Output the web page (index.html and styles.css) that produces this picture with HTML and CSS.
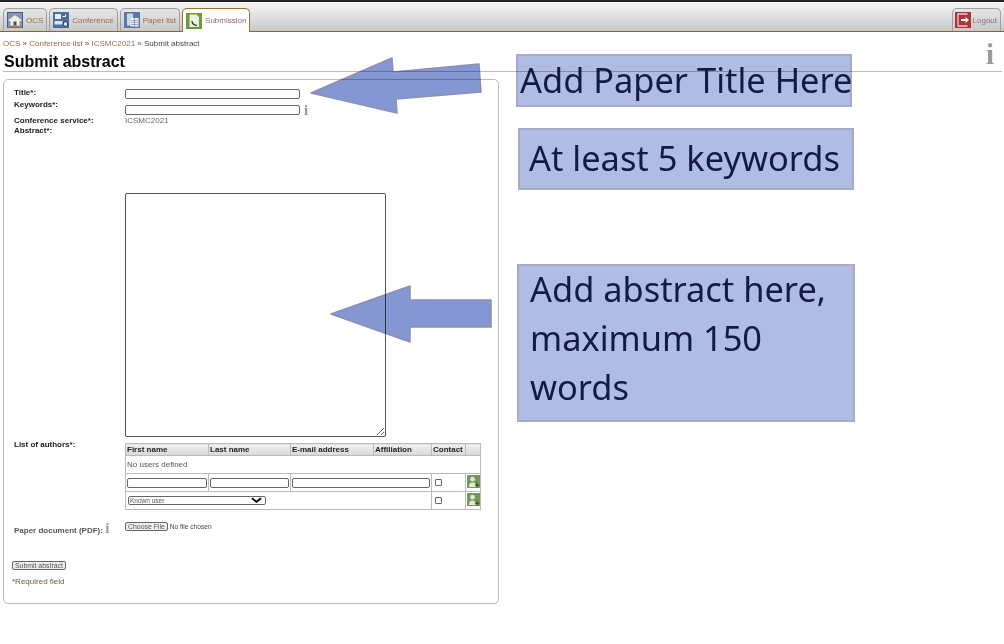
FILE: index.html
```html
<!DOCTYPE html>
<html lang="en">
<head>
<meta charset="utf-8">
<title>Submit abstract</title>
<link rel="stylesheet" href="styles.css">
</head>
<body>
<div class="topline"></div>
<nav class="tabbar">
  <a class="tab"><svg class="ico" viewBox="0 0 16 16"><rect width="16" height="16" fill="#3f5f8f"/><rect x="1" y="1" width="14" height="14" fill="#8296b4"/><path d="M1.500 8 8 3l6.500 5v1h-13z" fill="#f1ece4"/><rect x="3.500" y="8" width="9" height="5.500" fill="#f4f1ea"/><rect x="6.500" y="9.500" width="3" height="4" fill="#5a4a3a"/><path d="M1 15h14" stroke="#c8702a"/></svg>OCS</a>
  <a class="tab"><svg class="ico" viewBox="0 0 16 16"><rect width="16" height="16" fill="#4a6d9f"/><rect x="2" y="2" width="6" height="5" fill="#e8edf5"/><path d="M9.500 4.500h3M12.500 2.500v2" stroke="#fff"/><rect x="1.500" y="9" width="8" height="3.500" fill="#dfe5ef"/><circle cx="12.500" cy="12" r="2.300" fill="#e9edf3" stroke="#263a5a"/></svg>Conference</a>
  <a class="tab"><svg class="ico" viewBox="0 0 16 16"><rect width="16" height="16" fill="#5679a8"/><rect x="3" y="1.500" width="6" height="12" fill="#cdd6e4"/><rect x="6.500" y="6" width="8" height="8.500" fill="#eef0f4"/><path d="M7 8.500h7M7 10.500h7M7 12.500h7M10.500 6v8.500" stroke="#7d8896" stroke-width=".7"/></svg>Paper list</a>
  <a class="tab active"><svg class="ico" viewBox="0 0 16 16"><rect width="16" height="16" fill="#6d9b3a"/><path d="M3.500 1.500h7l2.500 2.500v10h-9.500z" fill="#eef2ea"/><path d="M6 8c0 3 1.500 4 5 4.500" fill="none" stroke="#2b3a20" stroke-width="1.300"/></svg>Submission</a>
  <a class="tab logout"><svg class="ico" viewBox="0 0 16 16"><rect width="16" height="16" fill="#b23038"/><path d="M12.500 2H3v12h9.500" fill="none" stroke="#eccfc8" stroke-width="1.300"/><path d="M6 7h4.500V5L14 8l-3.500 3V9H6z" fill="#fff"/></svg>Logout</a>
</nav>
<main class="page">
  <div class="crumbs"><a>OCS</a> » <a>Conference list</a> » <a>ICSMC2021</a> » <span>Submit abstract</span></div>
  <div class="headrow">
    <h1>Submit abstract</h1>
    <span class="info big">i</span>
  </div>
  <form class="card">
    <div class="row r-title"><label>Title*:</label><input class="text wide"></div>
    <div class="row r-kw"><label>Keywords*:</label><div class="val"><input class="text wide"><span class="info">i</span></div></div>
    <div class="row r-conf"><label>Conference service*:</label><div class="plain">ICSMC2021</div></div>
    <div class="row r-abs"><label>Abstract*:</label><textarea class="abstract"></textarea></div>
    <div class="row r-auth"><label>List of authors*:</label>
      <table class="authors">
        <colgroup><col class="c1"><col class="c2"><col class="c3"><col class="c4"><col class="c5"><col class="c6"></colgroup>
        <thead><tr><th>First name</th><th>Last name</th><th>E-mail address</th><th>Affiliation</th><th>Contact</th><th></th></tr></thead>
        <tbody>
          <tr class="none"><td colspan="6">No users defined</td></tr>
          <tr class="entry"><td><input class="text cell"></td><td><input class="text cell"></td><td colspan="2"><input class="text cell"></td><td><input type="checkbox" class="chk"></td><td class="add"><svg class="addicon" viewBox="0 0 14 14"><rect width="14" height="14" fill="#75985a"/><circle cx="6" cy="4.500" r="2.500" fill="#dfe8d6"/><path d="M2 13c0-4 2-5 4-5s3 1 3.500 2V13z" fill="#dfe8d6"/><path d="M10.500 8.500v4.500M8.500 11h4.500" stroke="#2c3d22" stroke-width="1"/></svg></td></tr>
          <tr class="entry"><td colspan="4"><div class="knownwrap"><select class="known"><option>Known user</option></select><svg class="chev" viewBox="0 0 12 6"><path d="M1 1l5 4 5-4" fill="none" stroke="#000" stroke-width="2"/></svg></div></td><td><input type="checkbox" class="chk"></td><td class="add"><svg class="addicon" viewBox="0 0 14 14"><rect width="14" height="14" fill="#75985a"/><circle cx="6" cy="4.500" r="2.500" fill="#dfe8d6"/><path d="M2 13c0-4 2-5 4-5s3 1 3.500 2V13z" fill="#dfe8d6"/><path d="M10.500 8.500v4.500M8.500 11h4.500" stroke="#2c3d22" stroke-width="1"/></svg></td></tr>
        </tbody>
      </table>
    </div>
    <div class="row r-pdf"><label class="soft">Paper document (PDF): <span class="info">i</span></label><div class="file"><button type="button" class="btn">Choose File</button><span>No file chosen</span></div></div>
    <button type="button" class="btn submit">Submit abstract</button>
    <p class="req">*Required field</p>
  </form>
</main>
<svg class="arrow a1" viewBox="0 0 172 57"><polygon points="1,36 82,1 83,15 169,7 171,35 86,42 87,56"/></svg>
<svg class="arrow a2" viewBox="0 0 161 58"><polygon points="0,29 79,1 79,15 160,15 160,42 79,42 79,57"/></svg>
<div class="note n1">Add Paper Title Here</div>
<div class="note n2">At least 5 keywords</div>
<div class="note n3"><div class="n3text">Add abstract here, maximum 150 words</div></div>
</body>
</html>
```
FILE: styles.css
```css
* { box-sizing: border-box; }
html, body { margin: 0; padding: 0; }
body { position: relative; width: 1004px; height: 644px; overflow: hidden; background: #fff; font-family: "Liberation Sans", Arial, sans-serif; font-size: 8px; color: #333; }
.topline { height: 2px; background: #222; }
.tabbar { display: flex; align-items: flex-end; gap: 2px; height: 30px; padding: 0 3px; background: linear-gradient(#f6f6f6, #c9c9c9); border-bottom: 1px solid #8a6a1c; }
.tab { display: flex; align-items: center; gap: 3px; height: 23px; padding: 0 3px; border: 1px solid #a0a0a0; border-bottom: 0; border-radius: 5px 5px 0 0; background: linear-gradient(#e6e6e6, #c8c8c8); color: #a5654c; }
.tab.active { background: #fff; border-color: #9a7420; color: #8c6a7a; margin-bottom: -1px; height: 24px; }
.tab.logout { margin-left: auto; color: #8c6a7a; padding-left: 2px; gap: 2px; }
.ico { width: 16px; height: 16px; flex: none; }
.page { padding: 6px 2px 0 3px; }
.crumbs { height: 12px; line-height: 12px; color: #555; }
.crumbs a { color: #a5654c; }
.crumbs span { color: #444; }
.headrow { position: relative; height: 22px; padding-top: 2px; border-bottom: 1px solid #bbb; }
h1 { margin: 0 0 0 1px; font-size: 16px; line-height: 19px; color: #000; font-weight: bold; }
.info { font-family: "Liberation Serif", serif; font-weight: bold; color: #999; font-size: 15px; line-height: 10px; }
.info.big { position: absolute; right: 8px; top: -11px; font-size: 29px; line-height: 30px; }
.card { position: relative; width: 496px; height: 525px; margin-top: 7px; padding: 7px 0 0 10px; border: 1px solid #bbb; border-radius: 5px; }
.row { display: grid; grid-template-columns: 111px 1fr; }
label { padding-top: 1px; font-weight: bold; color: #222; line-height: 10px; }
label.soft { color: #555; }
.val { display: flex; align-items: center; gap: 4px; margin-top: 5px; height: 11px; }
.text { display: block; height: 10px; padding: 0; border: 1px solid #666; border-radius: 2px; background: #fff; }
.wide { width: 175px; }
.r-title { height: 12px; }
.r-title .text { margin-top: 2px; }
.r-kw { height: 16px; }
.r-conf { height: 10px; }
.plain { padding-top: 1px; color: #666; line-height: 10px; }
.r-abs { height: 314px; }
.abstract { display: block; width: 261px; height: 244px; margin-top: 68px; padding: 0; border: 1px solid #555; border-radius: 2px; background: #fff; }
.r-auth { height: 71px; }
.authors { width: 355px; height: 67px; table-layout: fixed; border-collapse: collapse; border: 1px solid #bbb; margin: 4px 0 0; font-size: 8px; }
.c1 { width: 83px; } .c2 { width: 82px; } .c3 { width: 83px; } .c4 { width: 58px; } .c5 { width: 34px; } .c6 { width: 15px; }
.authors th { height: 12px; padding: 0 1px; text-align: left; font-weight: bold; color: #222; background: linear-gradient(#f0f0f0, #d8d8d8); border: 1px solid #bbb; overflow: hidden; white-space: nowrap; }
.authors td { padding: 0 1px; border: 1px solid #bbb; color: #555; }
.none { height: 18px; }
.none td { vertical-align: top; padding-top: 4px; }
.entry { height: 18px; }
.cell { width: 100%; }
.chk { display: block; width: 7px; height: 7px; margin: 0 0 0 2px; appearance: none; border: 1px solid #666; border-radius: 1px; }
.add { padding: 0 !important; vertical-align: top; }
.addicon { display: block; width: 13px; height: 13px; margin: 1px 0 0 1px; }
.knownwrap { position: relative; width: 138px; margin-left: 1px; }
.known { display: block; width: 100%; height: 9px; padding: 0 1px; appearance: none; font: 6.500px/7px "Liberation Sans", sans-serif; color: #555; border: 1px solid #666; border-radius: 2px; background: #fff; }
.chev { position: absolute; right: 4px; top: 1px; width: 11px; height: 6px; }
.r-pdf { height: 30px; margin-top: 12px; }
.r-pdf label { padding-top: 1px; white-space: nowrap; }
.file { display: flex; gap: 2px; align-items: flex-start; font-size: 6.600px; color: #444; line-height: 9px; }
.btn { height: 9px; padding: 0 2px; font: 6.900px/7px "Liberation Sans", sans-serif; color: #555; background: #eee; border: 1px solid #666; border-radius: 2px; }
.submit { display: block; margin: 9px 0 0 -2px; }
.req { margin: 7px 0 0 -2px; color: #6e5a3c; line-height: 10px; }
.arrow { position: absolute; overflow: visible; mix-blend-mode: multiply; }
.arrow polygon { fill: #8497d2; stroke: #8c8fb4; stroke-width: 1.500; stroke-linejoin: round; }
.a1 { left: 310px; top: 57px; width: 172px; height: 57px; }
.a2 { left: 331px; top: 285px; width: 161px; height: 58px; }
.note { position: absolute; border: 2px solid #a8abc9; background: #b1bce2; color: #111c45; font-family: "Noto Sans", sans-serif; font-size: 34.400px; mix-blend-mode: multiply; }
.n1 { left: 516px; top: 54px; width: 336px; height: 53px; line-height: 48px; padding-left: 2px; white-space: nowrap; }
.n2 { left: 518px; top: 128px; width: 336px; height: 62px; line-height: 56px; padding-left: 9px; white-space: nowrap; }
.n3 { left: 517px; top: 264px; width: 338px; height: 158px; line-height: 49px; padding: 0 10px 0 11px; }
.n3text { margin-top: -2px; }
```
